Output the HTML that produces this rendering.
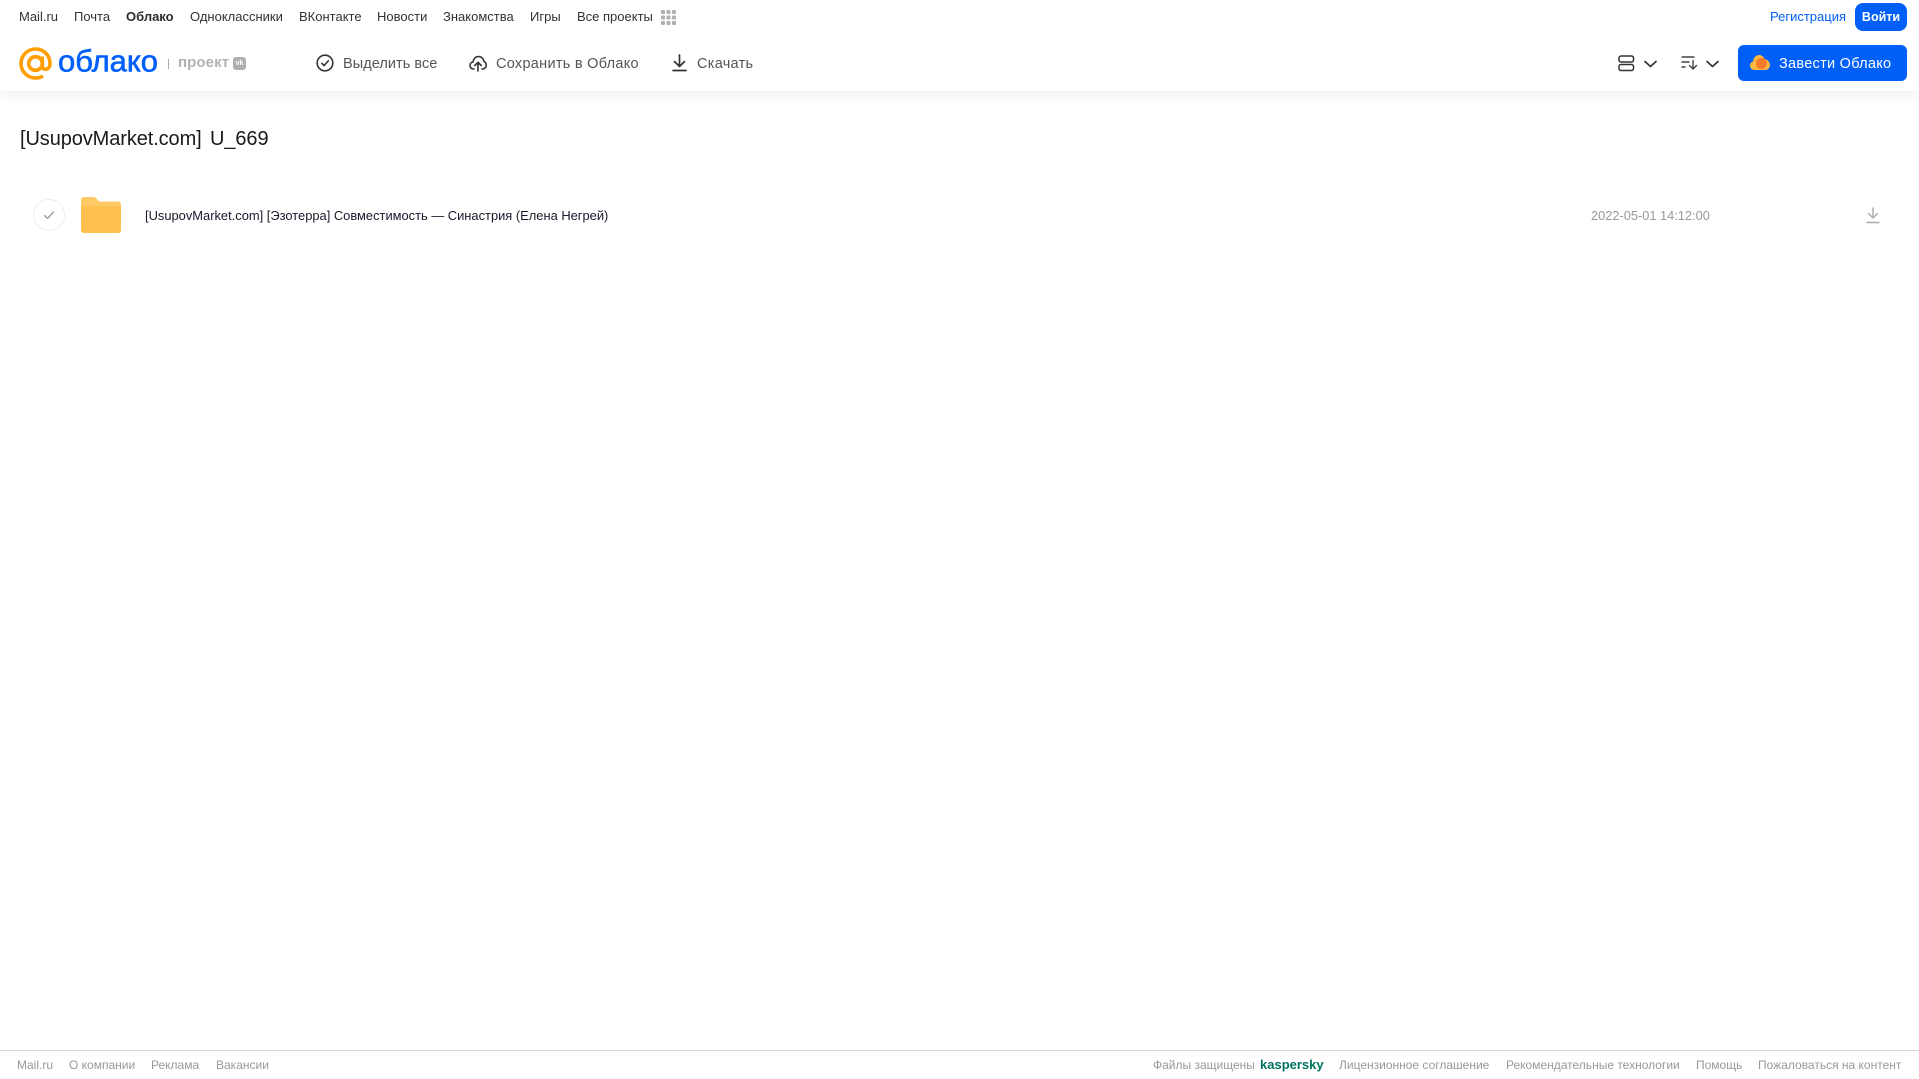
<!DOCTYPE html>
<html lang="ru">
<head>
<meta charset="utf-8">
<title>Облако</title>
<style>
html,body{margin:0;padding:0;background:#fff}
body{width:1919px;height:1079px;position:relative;overflow:hidden;font-family:"Liberation Sans",Arial,sans-serif}
.t{position:absolute;white-space:nowrap;line-height:20px;height:20px}
.n{font-size:13px;color:#333;top:7px}
.b{font-size:14.5px;color:#555;top:54px;letter-spacing:.28px}
.f{font-size:12px;color:#999;top:1055px}
svg{position:absolute;overflow:visible}
#hd{position:absolute;left:0;top:0;width:1919px;height:91px;background:#fff;box-shadow:0 3px 14px rgba(0,0,0,.07)}
#ft{position:absolute;left:0;top:1050px;width:1919px;height:29px;background:#fff;border-top:1px solid #d8d8d8;box-sizing:border-box}
</style>
</head>
<body>
<div id="hd"></div>

<span class="t n" style="left:19px">Mail.ru</span>
<span class="t n" style="left:74px">Почта</span>
<span class="t n" style="left:126px;font-weight:700;color:#2c2d2e">Облако</span>
<span class="t n" style="left:190px">Одноклассники</span>
<span class="t n" style="left:299px">ВКонтакте</span>
<span class="t n" style="left:377px">Новости</span>
<span class="t n" style="left:443px">Знакомства</span>
<span class="t n" style="left:530px">Игры</span>
<span class="t n" style="left:577px">Все проекты</span>
<svg style="left:661px;top:10px" width="15" height="15" fill="#b0b0b0">
<rect x="0" y="0" width="4" height="4" rx="1"/><rect x="5.5" y="0" width="4" height="4" rx="1"/><rect x="11" y="0" width="4" height="4" rx="1"/>
<rect x="0" y="5.5" width="4" height="4" rx="1"/><rect x="5.5" y="5.5" width="4" height="4" rx="1"/><rect x="11" y="5.5" width="4" height="4" rx="1"/>
<rect x="0" y="11" width="4" height="4" rx="1"/><rect x="5.5" y="11" width="4" height="4" rx="1"/><rect x="11" y="11" width="4" height="4" rx="1"/>
</svg>

<span class="t n" style="left:1770px;color:#005ff9">Регистрация</span>
<div style="position:absolute;left:1855px;top:3px;width:52px;height:28px;background:#005ff9;border-radius:8px;color:#fff;font-size:12.5px;font-weight:700;line-height:28px;text-align:center">Войти</div>

<svg style="left:19px;top:47px" width="33" height="33" viewBox="0 0 33 33" fill="none" stroke="#ff9e00" stroke-width="3.600">
<circle cx="16.500" cy="16.500" r="6.800"/>
<path d="M23.300 9.500v9.500c0 5 7.700 4.500 7.700-2.500C31 8 24.500 2 16.500 2S2 8.500 2 16.500 8.500 31 16.500 31c3 0 5.500-.7 7.500-2"/>
</svg>
<svg style="left:58px;top:44px" width="105" height="36">
<text x="0" y="27.500" font-family="'Liberation Sans',sans-serif" font-size="31" fill="#005ff9" stroke="#005ff9" stroke-width=".6" textLength="100" lengthAdjust="spacingAndGlyphs">облако</text>
</svg>
<div style="position:absolute;left:168px;top:59px;width:1px;height:10px;background:#aaa"></div>
<span class="t" style="left:178px;top:53px;font-size:15px;font-weight:700;color:#b2b2b2;letter-spacing:.1px">проект</span>
<div style="position:absolute;left:233px;top:57px;width:13px;height:13px;background:#b0b0b0;border-radius:3px;color:#fff;font-size:7px;font-weight:700;line-height:13px;text-align:center">vk</div>

<svg style="left:316px;top:54px" width="18" height="18" fill="none" stroke="#333" stroke-width="1.600" stroke-linecap="round" stroke-linejoin="round">
<circle cx="9" cy="9" r="7.800"/><path d="M5.800 9.300l2.300 2.300 4.200-4.700"/>
</svg>
<span class="t b" style="left:343px;letter-spacing:.05px">Выделить все</span>
<svg style="left:469px;top:54px" width="18" height="18" fill="none" stroke="#333" stroke-width="1.600" stroke-linecap="round" stroke-linejoin="round">
<path d="M5 15H4.500C2.500 15 1 13.500 1 11.500c0-1.800 1.200-3.200 3-3.500C4.300 5 6.500 2.500 9.500 2.500 12.500 2.500 14.500 4.800 15 7.500c1.300.5 2.200 2 2.200 3.700 0 2-1.500 3.800-3.700 3.800H13"/>
<path d="M9 17V8.500M5.800 11.500L9 8.300l3.200 3.200"/>
</svg>
<span class="t b" style="left:496px">Сохранить в Облако</span>
<svg style="left:672px;top:54px" width="15" height="18" fill="none" stroke="#333" stroke-width="1.700" stroke-linecap="round" stroke-linejoin="round">
<path d="M7.500 1v11M2.500 7.500l5 5 5-5"/><path d="M1 16.500h13"/>
</svg>
<span class="t b" style="left:697px">Скачать</span>

<svg style="left:1618px;top:55px" width="17" height="16" fill="none" stroke="#333" stroke-width="1.500">
<rect x="1" y="1" width="14.500" height="6" rx="2"/><rect x="1" y="9.500" width="14.500" height="6" rx="2"/>
</svg>
<svg style="left:1644px;top:60px" width="13" height="8" fill="none" stroke="#333" stroke-width="1.700" stroke-linecap="round" stroke-linejoin="round"><path d="M1 1.500l5.500 5 5.500-5"/></svg>
<svg style="left:1681px;top:55px" width="17" height="15" fill="none" stroke="#444" stroke-width="1.400" stroke-linecap="round" stroke-linejoin="round">
<path d="M1 2h12M1 7h7M1 12h3"/><path d="M12 5.500v8M8.500 10.500l3.500 3.500 3.500-3.500"/>
</svg>
<svg style="left:1706px;top:60px" width="13" height="8" fill="none" stroke="#333" stroke-width="1.700" stroke-linecap="round" stroke-linejoin="round"><path d="M1 1.500l5.500 5 5.500-5"/></svg>

<div style="position:absolute;left:1738px;top:45px;width:169px;height:36px;background:#005ff9;border-radius:6px"></div>
<svg style="left:1750px;top:54px" width="20" height="17">
<path d="M4.500 16C2 16 0 14 0 11.500 0 9.500 1.200 8 3 7.500 3.500 3.500 6 1 9 1c2.500 0 4.500 1.500 5.500 4C17.500 5.200 20 8 20 11c0 3-2.200 5-5 5z" fill="#ffb73e"/>
<circle cx="11.500" cy="9.500" r="5.500" fill="#f5792a"/>
</svg>
<span class="t b" style="left:1779px;color:#fff">Завести Облако</span>

<span class="t" style="left:20px;top:127px;height:24px;line-height:24px;font-size:20px;color:#1a1a1a;letter-spacing:-.1px;word-spacing:3px">[UsupovMarket.com] U_669</span>

<svg style="left:33px;top:199px" width="32" height="32" fill="none">
<circle cx="16" cy="16" r="15.500" stroke="#eeeeee"/>
<path d="M11.500 16.500l3 3 6-6.500" stroke="#999" stroke-width="1.300" stroke-linecap="round" stroke-linejoin="round"/>
</svg>
<svg style="left:81px;top:197px" width="40" height="36">
<path d="M0 3C0 1.300 1.300 0 3 0h9c2 0 3 1 4 2.500L18 4.500h19c1.700 0 3 1.300 3 3V33c0 1.700-1.300 3-3 3H3c-1.700 0-3-1.300-3-3z" fill="#ffc04d"/>
<path d="M0 3C0 1.300 1.300 0 3 0h9c2 0 3 1 4 2.500L18 4.500h19c1.700 0 3 1.300 3 3V9H0z" fill="#ffca66"/>
</svg>
<span class="t" style="left:145px;top:206px;font-size:12.900px;color:#1a1a2a">[UsupovMarket.com] [Эзотерра] Совместимость — Синастрия (Елена Негрей)</span>
<span class="t" style="left:1591px;top:206px;font-size:12.800px;color:#999">2022-05-01 14:12:00</span>
<svg style="left:1866px;top:207px" width="14" height="17" fill="none" stroke="#aaa" stroke-width="1.400" stroke-linecap="round" stroke-linejoin="round">
<path d="M7 1v10M2.500 6.500L7 11l4.500-4.500"/><path d="M1 15.500h12"/>
</svg>

<div id="ft"></div>
<span class="t f" style="left:17px">Mail.ru</span>
<span class="t f" style="left:69px">О компании</span>
<span class="t f" style="left:151px">Реклама</span>
<span class="t f" style="left:216px">Вакансии</span>
<span class="t f" style="left:1153px">Файлы защищены</span>
<span class="t f" style="left:1260px;font-size:13px;font-weight:700;color:#00735f">kaspersky</span>
<span class="t f" style="left:1339px">Лицензионное соглашение</span>
<span class="t f" style="left:1506px">Рекомендательные технологии</span>
<span class="t f" style="left:1696px">Помощь</span>
<span class="t f" style="left:1758px">Пожаловаться на контент</span>
</body>
</html>
